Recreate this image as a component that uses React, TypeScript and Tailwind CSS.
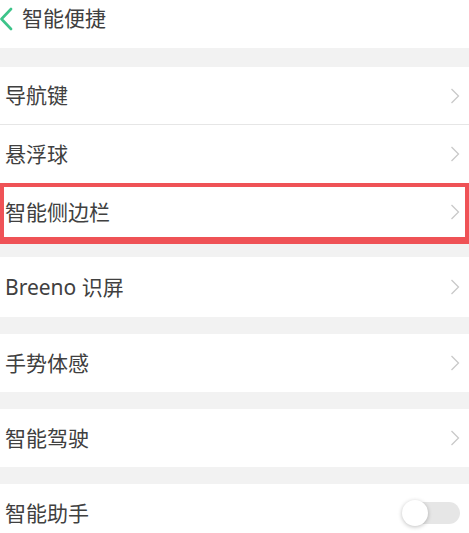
const font = { fontFamily: '"Noto Sans", "Noto Sans CJK SC", sans-serif' }

function Chevron() {
  return (
    <svg width="10" height="16" viewBox="0 0 10 16" fill="none" className="shrink-0">
      <path d="M1.5 1 L8.5 8 L1.5 15" stroke="#c9c9c9" strokeWidth="1.3" />
    </svg>
  )
}

function Row({ label, last = true, h = 'h-[58px]', pl = 'pl-[5px]', pr = 'pr-[9px]' }: { label: string; last?: boolean; h?: string; pl?: string; pr?: string }) {
  return (
    <div className={`flex items-center justify-between bg-white ${pl} ${pr} ${h} ${last ? '' : 'border-b border-[#e6e6e6]'}`}>
      <span className="text-[21px] leading-none text-[#404040]">{label}</span>
      <Chevron />
    </div>
  )
}

function Gap({ h }: { h: string }) {
  return <div className={`bg-[#f2f2f2] ${h}`} />
}

export default function App() {
  return (
    <div className="h-[533px] w-[469px] overflow-hidden bg-white" style={font}>
      <div className="flex h-[48px] items-start bg-white pt-[5px]">
        <svg width="14" height="24" viewBox="0 0 14 24" fill="none" className="mt-[2px] shrink-0">
          <path d="M11 2 L1.5 12 L11 22" stroke="#3dc48a" strokeWidth="2.6" strokeLinecap="round" strokeLinejoin="round" />
        </svg>
        <span className="ml-[8px] text-[21px] leading-[26px] text-[#404040]">智能便捷</span>
      </div>
      <Gap h="h-[19px]" />
      <Row label="导航键" last={false} />
      <Row label="悬浮球" />
      <div className="border-x-4 border-t-4 border-b-[7px] border-[#ef5256]">
        <Row label="智能侧边栏" h="h-[50px]" pl="pl-[1px]" pr="pr-[5px]" />
      </div>
      <Gap h="h-[13px]" />
      <Row label="Breeno 识屏" h="h-[60px]" />
      <Gap h="h-[17px]" />
      <Row label="手势体感" />
      <Gap h="h-[17px]" />
      <Row label="智能驾驶" />
      <Gap h="h-[17px]" />
      <div className="flex h-[58px] items-center justify-between bg-white pl-[5px] pr-[9px]">
        <span className="text-[21px] leading-none text-[#404040]">智能助手</span>
        <div className="relative flex h-[26px] w-[58px] items-center">
          <div className="ml-[10px] h-[22px] w-[48px] rounded-full bg-[#e6e6e6]" />
          <div className="absolute left-0 top-0 h-[26px] w-[26px] rounded-full bg-white shadow-[0_1px_4px_rgba(0,0,0,0.25)]" />
        </div>
      </div>
    </div>
  )
}
